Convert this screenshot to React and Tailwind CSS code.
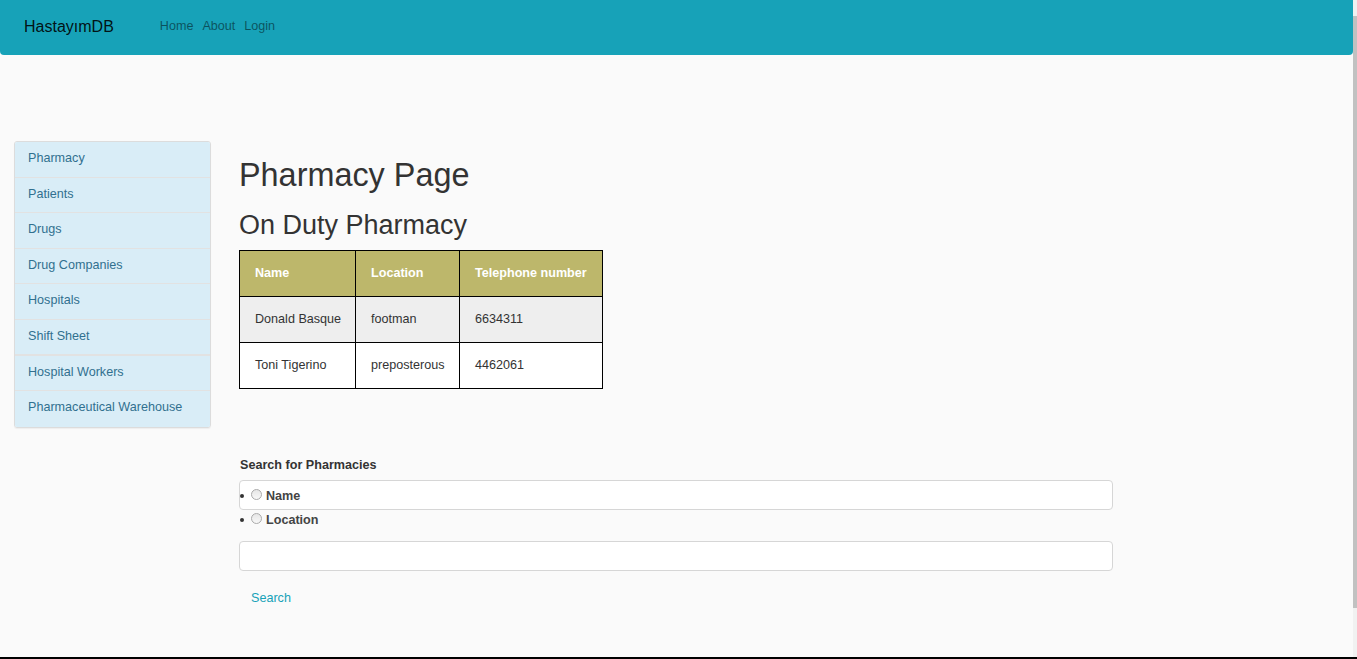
const menu = [
  "Pharmacy",
  "Patients",
  "Drugs",
  "Drug Companies",
  "Hospitals",
  "Shift Sheet",
  "Hospital Workers",
  "Pharmaceutical Warehouse",
];

const onDuty = [
  { name: "Donald Basque", location: "footman", phone: "6634311" },
  { name: "Toni Tigerino", location: "preposterous", phone: "4462061" },
];

function Navbar() {
  return (
    <nav className="flex h-[55px] items-center rounded-b-[4px] bg-[#17a2b8] pb-[2px]">
      <a className="ml-[24px] text-[16px] text-black/90 mt-[1px]">HastayımDB</a>
      <div className="ml-[46px] flex gap-[9px] text-[12.6px] text-black/50 -mt-[1px]">
        <a>Home</a>
        <a>About</a>
        <a>Login</a>
      </div>
    </nav>
  );
}

function Sidebar() {
  return (
    <div className="w-[197px] shrink-0 self-start overflow-hidden rounded-[3px] border border-[#dcdcdc] shadow-[0_1px_1px_rgba(0,0,0,0.05)]">
      {menu.map((item, i) => (
        <a
          key={item}
          className={`block h-[35.6px] bg-[#d9edf7] pl-[13px] text-[12.6px] leading-[33px] text-[#31708f] ${
            i < menu.length - 1 ? "border-b border-[#e2e2e2]" : ""
          } ${i === 5 ? "border-b-2" : ""}`}
        >
          {item}
        </a>
      ))}
    </div>
  );
}

function RadioRow({ label }) {
  return (
    <li className="flex h-[24px] items-center">
      <span className="h-[4px] w-[4px] rounded-full bg-[#333]" />
      <span className="ml-[7px] -mt-[4px] h-[11px] w-[11px] rounded-full border border-[#aaa] bg-gradient-to-b from-[#e6e6e6] to-[#f8f8f8]" />
      <span className="ml-[4px] text-[12.6px] font-bold text-[#444]">{label}</span>
    </li>
  );
}

function SearchForm() {
  return (
    <div className="mt-[68px] w-[874px]">
      <div className="ml-[1px] h-[16px] text-[12.6px] font-bold leading-[16px] text-[#333]">Search for Pharmacies</div>
      <div className="mt-[7px] h-[30px] rounded-[4px] border border-[#d6d6d6] bg-white" />
      <ul className="-mt-[26px] ml-[1px]">
        <RadioRow label="Name" />
        <RadioRow label="Location" />
      </ul>
      <div className="mt-[9px] h-[30px] rounded-[4px] border border-[#d6d6d6] bg-white" />
      <a className="mt-[18px] ml-[12px] block text-[12.6px] leading-[18px] text-[#17a2b8]">Search</a>
    </div>
  );
}

function DutyTable() {
  return (
    <table className="mt-[10px] w-[363px] table-fixed border-collapse text-[12.6px]">
      <colgroup>
        <col className="w-[116px]" />
        <col className="w-[104px]" />
        <col className="w-[143px]" />
      </colgroup>
      <thead>
        <tr className="h-[46px] bg-[#bdb76b] text-left font-bold text-white">
          <th className="border border-black pl-[15px]">Name</th>
          <th className="border border-black pl-[15px]">Location</th>
          <th className="border border-black pl-[15px]">Telephone number</th>
        </tr>
      </thead>
      <tbody className="text-[#333]">
        {onDuty.map((row, i) => (
          <tr key={row.name} className={`h-[46px] ${i === 0 ? "bg-[#eeeeee]" : "bg-white"}`}>
            <td className="border border-black pl-[15px]">{row.name}</td>
            <td className="border border-black pl-[15px]">{row.location}</td>
            <td className="border border-black pl-[15px]">{row.phone}</td>
          </tr>
        ))}
      </tbody>
    </table>
  );
}

export default function App() {
  return (
    <div className="flex h-[659px] overflow-hidden border-b-2 border-black bg-[#fafafa] font-['Liberation_Sans',Arial,sans-serif]">
      <div className="w-[1353px] shrink-0">
        <Navbar />
        <div className="mt-[86px] flex pl-[14px]">
          <Sidebar />
          <main className="ml-[28px]">
            <h1 className="mt-[16px] text-[32.4px] leading-[36px] text-[#333]">Pharmacy Page</h1>
            <h2 className="mt-[17px] text-[27px] leading-[30px] text-[#333]">On Duty Pharmacy</h2>
            <DutyTable />
            <SearchForm />
          </main>
        </div>
      </div>
      <div className="w-[4px] bg-[#f1f1f1]">
        <div className="mt-[16px] h-[592px] bg-[#c1c1c1]" />
      </div>
    </div>
  );
}
